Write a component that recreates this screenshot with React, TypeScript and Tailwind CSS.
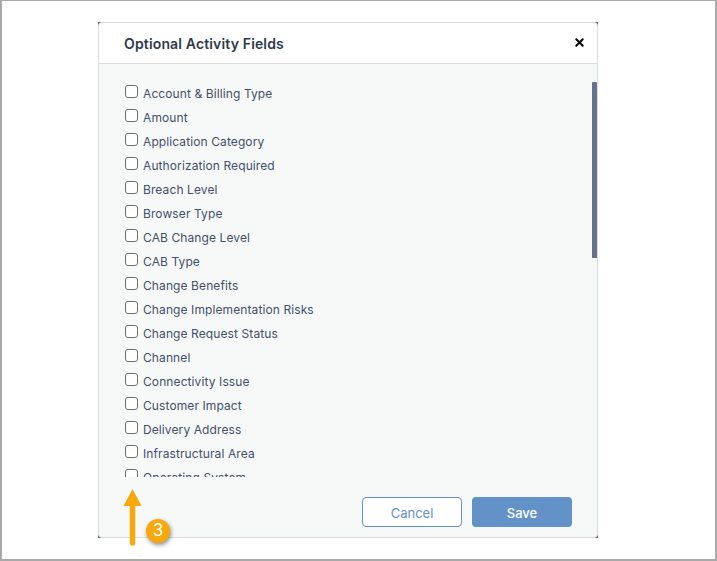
import React, { type FC } from 'react';
import { X } from 'lucide-react';

const fields = [
  'Account & Billing Type',
  'Amount',
  'Application Category',
  'Authorization Required',
  'Breach Level',
  'Browser Type',
  'CAB Change Level',
  'CAB Type',
  'Change Benefits',
  'Change Implementation Risks',
  'Change Request Status',
  'Channel',
  'Connectivity Issue',
  'Customer Impact',
  'Delivery Address',
  'Infrastructural Area',
  'Operating System',
];

const App: FC = () => {
  return (
    <div className="relative flex h-[561px] w-[717px] items-start overflow-hidden border-r-2 border-b-2 border-l-2 border-t border-[#a9a9a9] bg-white pt-[21px] pl-[96px] font-['Inter',sans-serif]">
      <div className="h-[516px] w-[500px] bg-[#666666]">
        <div className="flex h-full flex-col overflow-hidden rounded-[4px] border border-[#dcdcdc] bg-[#f7f9f9]">
          <div className="flex h-[41px] shrink-0 items-center justify-between border-b border-[#dcdcdc] bg-white pr-[11px] pl-[25px]">
            <h4 className="mt-[1px] text-[14px] font-semibold tracking-[0.15px] text-[#2f3b4a]">Optional Activity Fields</h4>
            <X size={13} strokeWidth={3.5} className="mb-[2px] text-black" />
          </div>
          <div className="flex min-h-0 flex-1 items-start">
            <div className="mt-[18px] h-[395px] flex-1 overflow-hidden pl-[26px]">
              {fields.map((field) => (
                <label key={field} className="flex h-[24px] items-center gap-[5px]">
                  <span className="mb-[5px] h-[13px] w-[13px] shrink-0 rounded-[3px] border border-[#6f6f6f] bg-white" />
                  <span className="text-[12px] tracking-[0.1px] text-[#3f4f6b]">{field}</span>
                </label>
              ))}
            </div>
            <div className="mt-[18px] h-[176px] w-[5px] shrink-0 rounded-t-[1px] bg-[#67728f]" />
          </div>
          <div className="flex h-[60px] shrink-0 justify-end gap-[10px] pr-[25px] pt-[20px]">
            <button className="h-[30px] w-[100px] rounded-[4px] border border-[#6292c8] bg-white pt-[4px] text-[13px] text-[#6292c8]">
              Cancel
            </button>
            <button className="h-[30px] w-[100px] rounded-[4px] bg-[#6292c8] pt-[4px] text-[13px] font-medium text-white">
              Save
            </button>
          </div>
        </div>
      </div>

      <svg className="absolute top-[488px] left-[121px]" width="20" height="57" viewBox="0 0 20 57">
        <path d="M9.5 0 L18.5 17 L0.5 17 Z" fill="#f7a90c" />
        <path d="M9.5 16 V54" stroke="#f7a90c" strokeWidth="5.5" strokeLinecap="round" />
      </svg>
      <div className="absolute top-[518px] left-[144px] flex h-[24px] w-[24px] items-center justify-center rounded-full bg-[#f7a90c] text-[17px] text-white shadow-[1px_2px_4px_rgba(0,0,0,0.45)]">
        3
      </div>
    </div>
  );
};

export default App;
